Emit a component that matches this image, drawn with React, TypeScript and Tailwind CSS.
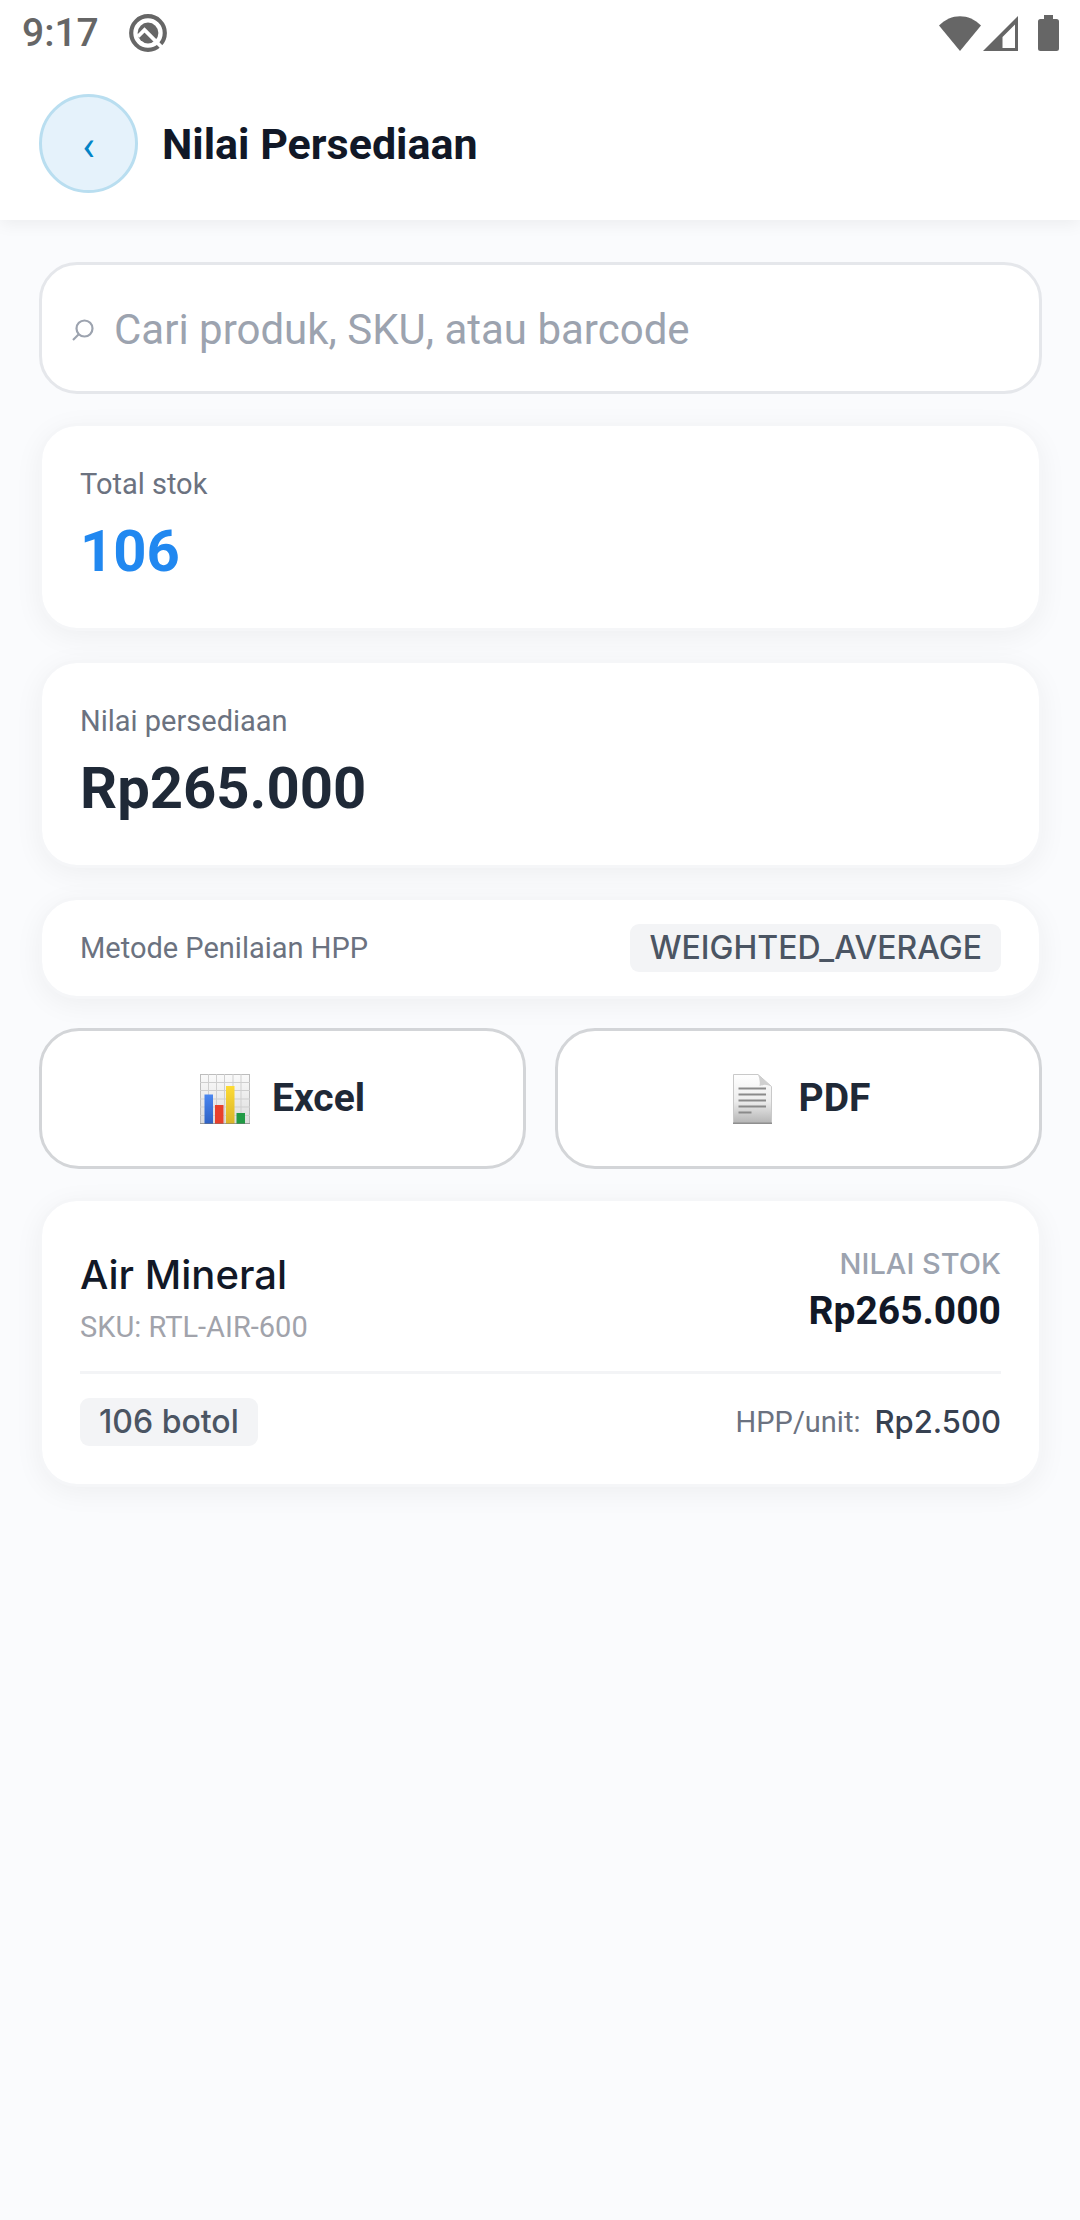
import { useState, type ReactNode } from 'react';

interface Product {
  id: string;
  nama: string;
  sku: string;
  stok: number;
  satuan: string;
  hpp: number;
}

const products: Product[] = [
  { id: '1', nama: 'Air Mineral', sku: 'RTL-AIR-600', stok: 106, satuan: 'botol', hpp: 2500 },
];

const metode = 'WEIGHTED_AVERAGE';

function formatRupiah(value: number) {
  return 'Rp' + value.toString().replace(/\B(?=(\d{3})+(?!\d))/g, '.');
}

function StatusBar() {
  return (
    <div className="flex h-[66px] items-center justify-between pr-[21px] pl-[22px] text-[#666666]">
      <div className="flex items-center gap-[30px]">
        <span className="text-[39px] leading-[48px] font-medium">9:17</span>
        <svg viewBox="0 0 38 38" className="h-[38px] w-[38px]" fill="none">
          <circle cx="19" cy="19" r="16.8" stroke="currentColor" strokeWidth="4.2" />
          <circle cx="19" cy="19" r="10.4" fill="currentColor" />
          <path d="M9 22.500 L15.500 16 L34 34.500" stroke="#fff" strokeWidth="3.8" />
        </svg>
      </div>
      <div className="flex items-center">
        <svg viewBox="0 0 42 35" className="h-[35px] w-[42px]" fill="currentColor">
          <path d="M0 9.500 C12 -3 30 -3 42 9.500 L21 35 Z" />
        </svg>
        <svg viewBox="0 0 35 35" className="ml-[2px] h-[35px] w-[35px]" fill="currentColor">
          <path fillRule="evenodd" d="M35 0 V35 H0 Z M32 8.500 L19.500 21 V32 H32 Z" />
        </svg>
        <svg viewBox="0 0 21 36" className="ml-[20px] h-[36px] w-[21px]" fill="currentColor">
          <path d="M6 0 H15 V4 H18.500 Q21 4 21 6.500 V33.500 Q21 36 18.500 36 H2.500 Q0 36 0 33.500 V6.500 Q0 4 2.500 4 H6 Z" />
        </svg>
      </div>
    </div>
  );
}

function ChartIcon() {
  return (
    <svg viewBox="0 0 50 50" className="h-[50px] w-[50px]" aria-hidden="true">
      <defs>
        <linearGradient id="sheet" x1="0" y1="0" x2="0" y2="1">
          <stop offset="0" stopColor="#fafafa" />
          <stop offset="1" stopColor="#dcdcdc" />
        </linearGradient>
        <linearGradient id="blue" x1="0" y1="0" x2="0" y2="1">
          <stop offset="0" stopColor="#4a86f0" />
          <stop offset="1" stopColor="#2f62c4" />
        </linearGradient>
        <linearGradient id="yellow" x1="0" y1="0" x2="0" y2="1">
          <stop offset="0" stopColor="#fddb35" />
          <stop offset="1" stopColor="#d9b42a" />
        </linearGradient>
      </defs>
      <rect x="0.500" y="0.500" width="49" height="49" fill="url(#sheet)" stroke="#bdbdbd" />
      <path
        d="M8.500 0 V50 M16.500 0 V50 M24.500 0 V50 M33 0 V50 M41 0 V50 M0 8.500 H50 M0 16.500 H50 M0 25 H50 M0 33 H50 M0 41.500 H50"
        stroke="#cfcfcf"
      />
      <rect x="4.500" y="20.500" width="8.500" height="29.500" fill="url(#blue)" />
      <rect x="15" y="31" width="8.500" height="19" fill="#e8402c" />
      <rect x="26" y="12" width="8.500" height="38" fill="url(#yellow)" />
      <rect x="36.500" y="39" width="8.500" height="11" fill="#219a45" />
      <path d="M0 49.500 H50" stroke="#777777" strokeOpacity="0.5" />
    </svg>
  );
}

function DocumentIcon() {
  return (
    <svg viewBox="0 0 50 50" className="h-[50px] w-[50px]" aria-hidden="true">
      <defs>
        <linearGradient id="page" x1="0" y1="0" x2="0" y2="1">
          <stop offset="0" stopColor="#ffffff" />
          <stop offset="0.55" stopColor="#ececec" />
          <stop offset="1" stopColor="#b4b4b4" />
        </linearGradient>
      </defs>
      <path d="M6.500 0.500 H31 L44.500 12.500 V49.500 H6.500 Z" fill="url(#page)" stroke="#c9c9c9" />
      <path d="M31 0.500 L44.500 12.500 Q38 9.500 32.500 12 Q33.500 6 31 0.500 Z" fill="#d0d0d0" />
      <path d="M11.500 14.500 H39 M11.500 20.500 H39 M11.500 26.500 H39 M11.500 32.500 H39 M11.500 38.500 H24.500" stroke="#8a8a8a" strokeWidth="1.8" />
      <path d="M6 49.300 H45" stroke="#8f8f8f" strokeWidth="1.4" />
    </svg>
  );
}

function Card({ className, children }: { className: string; children: ReactNode }) {
  return (
    <div className={`rounded-[38px] border-[3px] border-[#f5f6f8] bg-white bg-clip-padding px-[38px] shadow-[0_6px_28px_rgba(0,0,0,0.05)] ${className}`}>
      {children}
    </div>
  );
}

function Chip({ children }: { children: ReactNode }) {
  return (
    <span className="rounded-[9px] bg-[#f3f4f6] px-[19px] font-[Inter,sans-serif] text-[32px] leading-[48px] font-medium text-[#4b5563]">
      {children}
    </span>
  );
}

function StatCard({ label, value, color }: { label: string; value: string; color: string }) {
  return (
    <Card className="py-[38px]">
      <p className="text-[29px] leading-[40px] text-[#6b7280]">{label}</p>
      <p className={`mt-2 text-[58px] leading-[78px] font-bold ${color}`}>{value}</p>
    </Card>
  );
}

function ExportButton({ icon, label }: { icon: ReactNode; label: string }) {
  return (
    <button
      type="button"
      className="flex flex-1 items-center justify-center gap-[22px] rounded-[40px] border-[3px] border-[#d3d5d8] bg-white py-[39px] text-[39px] leading-[57px] font-bold text-[#1f2937]"
    >
      {icon}
      {label}
    </button>
  );
}

export default function App() {
  const [query, setQuery] = useState('');

  const totalStok = products.reduce((sum, p) => sum + p.stok, 0);
  const totalNilai = products.reduce((sum, p) => sum + p.stok * p.hpp, 0);
  const q = query.trim().toLowerCase();
  const visible = products.filter((p) => p.nama.toLowerCase().includes(q) || p.sku.toLowerCase().includes(q));

  return (
    <div className="min-h-screen bg-[#fafbfd] font-[Roboto,sans-serif]">
      <header className="bg-white shadow-[0_4px_16px_rgba(0,0,0,0.06)]">
        <StatusBar />
        <div className="flex items-center gap-6 px-[39px] pt-[28px] pb-[27px]">
          <button
            type="button"
            aria-label="Kembali"
            className="h-[99px] w-[99px] rounded-full border-[3px] border-[#b9def0] bg-[#e5f2fb] pt-1 text-[42px] leading-[56px] text-[#0284c7]"
          >
            ‹
          </button>
          <h1 className="text-[43px] leading-[56px] font-bold text-[#111827]">Nilai Persediaan</h1>
        </div>
      </header>

      <main className="flex flex-col gap-[29px] pt-[42px] pr-[38px] pb-10 pl-[39px]">
        <label className="flex items-center gap-5 rounded-[38px] border-[3px] border-[#e5e7eb] bg-white px-[30px] pt-[37px] pb-[33px]">
          <svg viewBox="0 0 22 22" className="h-[22px] w-[22px] shrink-0 text-[#9ca3af]" fill="none" stroke="currentColor" strokeWidth="2.2" aria-hidden="true">
            <circle cx="12.500" cy="9.500" r="8" />
            <path d="M7 15 L1 21" />
          </svg>
          <input
            type="text"
            value={query}
            onChange={(e) => setQuery(e.target.value)}
            placeholder="Cari produk, SKU, atau barcode"
            className="h-[56px] min-w-0 flex-1 bg-transparent text-[42px] leading-[56px] text-[#111827] outline-none placeholder:text-[#9ca3af]"
          />
        </label>

        <StatCard label="Total stok" value={String(totalStok)} color="text-[#2188f0]" />
        <StatCard label="Nilai persediaan" value={formatRupiah(totalNilai)} color="text-[#1f2937]" />

        <Card className="flex items-center justify-between py-[24px]">
          <span className="text-[29px] leading-[40px] text-[#6b7280]">Metode Penilaian HPP</span>
          <Chip>{metode}</Chip>
        </Card>

        <div className="flex gap-[29px]">
          <ExportButton icon={<ChartIcon />} label="Excel" />
          <ExportButton icon={<DocumentIcon />} label="PDF" />
        </div>

        {visible.map((p) => (
          <Card key={p.id} className="py-[38px]">
            <div className="flex items-center justify-between pb-[28px]">
              <div>
                <h2 className="font-[Inter,sans-serif] text-[40px] leading-[72px] font-medium text-[#111827]">{p.nama}</h2>
                <p className="text-[29px] leading-[32px] text-[#a1a3ab]">SKU: {p.sku}</p>
              </div>
              <div className="text-right">
                <p className="font-[Inter,sans-serif] text-[29px] leading-[40px] font-medium text-[#9ca3af]">NILAI STOK</p>
                <p className="text-[39px] leading-[54px] font-bold text-[#111827]">{formatRupiah(p.stok * p.hpp)}</p>
              </div>
            </div>
            <div className="flex items-center justify-between border-t-[3px] border-[#f3f4f6] pt-[24px]">
              <Chip>
                {p.stok} {p.satuan}
              </Chip>
              <div className="flex items-center gap-[14px]">
                <span className="text-[29px] leading-[40px] text-[#6b7280]">HPP/unit:</span>
                <span className="font-[Inter,sans-serif] text-[31px] leading-[40px] font-medium text-[#374151]">{formatRupiah(p.hpp)}</span>
              </div>
            </div>
          </Card>
        ))}
      </main>
    </div>
  );
}
